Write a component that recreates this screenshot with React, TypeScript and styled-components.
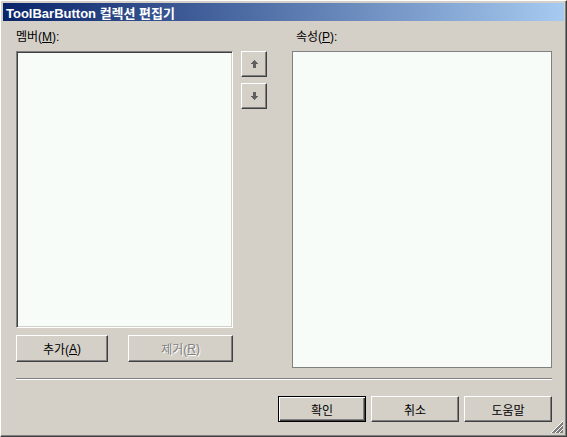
import React from 'react';
import styled, { createGlobalStyle } from 'styled-components';

const GlobalStyle = createGlobalStyle`
  html, body {
    margin: 0;
    padding: 0;
    background: #d4d0c8;
  }
`;

const face = '#d4d0c8';
const uiFont = `"Liberation Sans", "Noto Sans CJK KR", sans-serif`;

const Window = styled.div`
  position: relative;
  width: 567px;
  height: 437px;
  box-sizing: border-box;
  background: ${face};
  border: 1px solid;
  border-color: #ffffff #404040 #404040 #ffffff;
  box-shadow: inset -1px -1px #808080;
  padding: 2px;
  display: flex;
  flex-direction: column;
  font-family: ${uiFont};
  font-size: 12px;
  color: #000;
`;

const TitleBar = styled.div`
  height: 18px;
  flex: none;
  display: flex;
  align-items: center;
  padding-left: 3px;
  background: linear-gradient(to right, #0a246a, #a6caf0);
  color: #fff;
  font-weight: bold;
  font-size: 13px;
  white-space: nowrap;
`;

const Body = styled.div`
  flex: 1;
  display: flex;
  flex-direction: column;
  padding: 8px 12px 0 13px;
`;

const TopRow = styled.div`
  display: flex;
  align-items: flex-start;
`;

const Column = styled.div<{ $width: number }>`
  width: ${(p) => p.$width}px;
  display: flex;
  flex-direction: column;
`;

const Label = styled.div<{ $indent?: number }>`
  height: 16px;
  line-height: 16px;
  margin-bottom: 6px;
  padding-left: ${(p) => p.$indent ?? 0}px;
  white-space: nowrap;
`;

const ListBox = styled.div`
  height: 277px;
  box-sizing: border-box;
  background: #f8fcf8;
  border: 1px solid;
  border-color: #808080 #ffffff #ffffff #808080;
  box-shadow: inset 1px 1px #404040, inset -1px -1px ${face};
`;

const PropertyGrid = styled.div`
  height: 317px;
  box-sizing: border-box;
  background: #f8fcf8;
  border: 1px solid #808080;
`;

const ButtonRow = styled.div`
  display: flex;
  justify-content: space-between;
  margin-top: 7px;
`;

const Button = styled.button<{ $width: number; $height?: number }>`
  width: ${(p) => p.$width}px;
  height: ${(p) => p.$height ?? 26}px;
  box-sizing: border-box;
  padding: 0;
  margin: 0;
  background: ${face};
  font-family: ${uiFont};
  font-size: 12px;
  color: #000;
  display: flex;
  align-items: center;
  justify-content: center;
  border: 1px solid;
  border-color: #ffffff #404040 #404040 #ffffff;
  box-shadow: inset -1px -1px #808080;

  &:disabled {
    color: #808080;
    text-shadow: 1px 1px 0 #ffffff;
  }
`;

const DefaultButton = styled(Button)`
  border-color: #000;
  box-shadow: inset 1px 1px #ffffff, inset -1px -1px #404040, inset -2px -2px #808080;
`;

const ArrowColumn = styled.div`
  width: 26px;
  margin-left: 8px;
  margin-right: 25px;
  padding-top: 22px;
  display: flex;
  flex-direction: column;
  gap: 6px;
`;

const Separator = styled.div`
  margin-top: 10px;
  height: 0;
  border-top: 1px solid #808080;
  border-bottom: 1px solid #ffffff;
`;

const DialogButtons = styled.div`
  display: flex;
  justify-content: flex-end;
  gap: 5px;
  margin-top: 16px;
`;

const Grip = styled.svg`
  position: absolute;
  right: 3px;
  bottom: 3px;
`;

const ArrowIcon: React.FC<{ down?: boolean }> = ({ down }) => (
  <svg width="7" height="8" viewBox="0 0 7 8" shapeRendering="crispEdges">
    <g fill="#606060" transform={down ? 'rotate(180 3.5 4)' : undefined}>
      <rect x="3" y="0" width="1" height="1" />
      <rect x="2" y="1" width="3" height="1" />
      <rect x="1" y="2" width="5" height="1" />
      <rect x="0" y="3" width="7" height="1" />
      <rect x="2" y="4" width="3" height="4" />
    </g>
  </svg>
);

const SizeGrip: React.FC = () => (
  <Grip width="12" height="12" viewBox="0 0 12 12" shapeRendering="crispEdges">
    {[0, 4, 8].map((o) => (
      <g key={o}>
        <line x1={12} y1={o + 0.5} x2={o + 0.5} y2={12} stroke="#ffffff" strokeWidth="1" />
        <line x1={12} y1={o + 1.5} x2={o + 1.5} y2={12} stroke="#808080" strokeWidth="1" />
        <line x1={12} y1={o + 2.5} x2={o + 2.5} y2={12} stroke="#808080" strokeWidth="1" />
      </g>
    ))}
  </Grip>
);

const App: React.FC = () => (
  <>
    <GlobalStyle />
    <Window>
      <TitleBar>ToolBarButton 컬렉션 편집기</TitleBar>
      <Body>
        <TopRow>
          <Column $width={217}>
            <Label>
              멤버(<u>M</u>):
            </Label>
            <ListBox />
            <ButtonRow>
              <Button $width={92} $height={27}>
                추가(<u>A</u>)
              </Button>
              <Button $width={105} $height={27} disabled>
                제거(<u>R</u>)
              </Button>
            </ButtonRow>
          </Column>
          <ArrowColumn>
            <Button $width={26}>
              <ArrowIcon />
            </Button>
            <Button $width={26}>
              <ArrowIcon down />
            </Button>
          </ArrowColumn>
          <Column $width={260}>
            <Label $indent={4}>
              속성(<u>P</u>):
            </Label>
            <PropertyGrid />
          </Column>
        </TopRow>
        <Separator />
        <DialogButtons>
          <DefaultButton $width={88}>확인</DefaultButton>
          <Button $width={88}>취소</Button>
          <Button $width={88}>도움말</Button>
        </DialogButtons>
      </Body>
      <SizeGrip />
    </Window>
  </>
);

export default App;
